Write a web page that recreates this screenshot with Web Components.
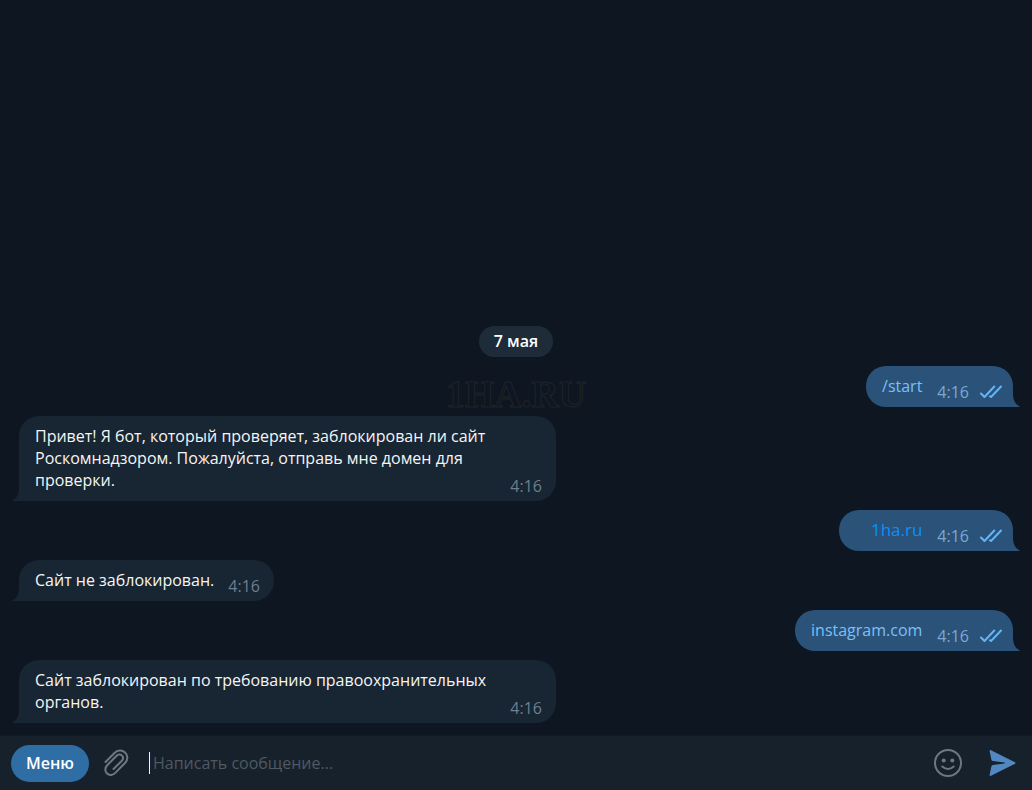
<!DOCTYPE html>
<html lang="ru">
<head>
<meta charset="utf-8">
<meta name="viewport" content="width=device-width, initial-scale=1">
<title>Чат с ботом</title>
<style>
html, body { margin: 0; height: 100%; }
body { background: #0e1621; font: 16px/22px "Open Sans", "Noto Sans", sans-serif; color: #f5f5f5; overflow: hidden; }
</style>
</head>
<body>
<chat-window>
  <chat-date>7 мая</chat-date>
  <chat-message out time="4:16"><a href="#start">/start</a></chat-message>
  <chat-message time="4:16">Привет! Я бот, который проверяет, заблокирован ли сайт Роскомнадзором. Пожалуйста, отправь мне домен для проверки.</chat-message>
  <chat-message out accent time="4:16"><a href="#1ha.ru">1ha.ru</a></chat-message>
  <chat-message time="4:16">Сайт не заблокирован.</chat-message>
  <chat-message out time="4:16"><a href="#instagram.com">instagram.com</a></chat-message>
  <chat-message time="4:16">Сайт заблокирован по требованию правоохранительных органов.</chat-message>
  <chat-composer slot="composer"></chat-composer>
  <chat-watermark slot="mark">1HA.RU</chat-watermark>
</chat-window>

<script>
class ShadowElement extends HTMLElement {
  constructor() {
    super();
    this.attachShadow({ mode: "open" }).innerHTML = this.constructor.markup;
  }
}

class ChatWindow extends ShadowElement {
  static markup = `
    <style>
      :host { display: flex; flex-direction: column; min-height: 100vh; position: relative; }
      main { flex: 1; display: flex; flex-direction: column; justify-content: flex-end; gap: 9px; padding: 12px 19px; }
    </style>
    <main><slot></slot></main>
    <slot name="mark"></slot>
    <slot name="composer"></slot>`;
}

class ChatDate extends ShadowElement {
  static markup = `
    <style>
      :host { display: block; align-self: center; padding: 4px 15px 5px; border-radius: 16px; background: #1e2c3a; color: #fff; font-weight: 600; }
    </style>
    <slot></slot>`;
}

class ChatMessage extends ShadowElement {
  static markup = `
    <style>
      :host { display: flow-root; position: relative; box-sizing: border-box; align-self: flex-start; width: fit-content; max-width: 537px; padding: 9px 14px 4px 16px; border-radius: 20px 20px 20px 0; background: #182533; }
      :host([out]) { align-self: flex-end; padding-right: 11px; border-radius: 20px 20px 0 20px; background: #2b5278; }
      :host([accent]) { padding-left: 32px; }
      ::slotted(a) { color: #79c0fa; text-decoration: none; }
      :host([accent]) ::slotted(a) { color: #0a90fb; font-size: 17px; }
      .meta { float: right; display: flex; align-items: center; gap: 11px; margin: 6px 0 0 14px; color: #6d7f8f; }
      :host([out]) .meta { margin-left: 15px; color: #7da8d3; }
      .ticks { display: none; }
      :host([out]) .ticks { display: block; }
      .tail { position: absolute; left: -7px; bottom: 0; fill: #182533; }
      :host([out]) .tail { left: auto; right: -7px; fill: #2b5278; transform: scaleX(-1); }
    </style>
    <slot></slot>
    <span class="meta"><time></time>
      <svg class="ticks" width="22" height="14" viewBox="0 0 22 14" fill="none" stroke="#62b5f7" stroke-width="2" stroke-linecap="round" stroke-linejoin="round"><path d="M1 8.5 4.5 12 14.3 1.5M10 11.3l1 .7L21 1.5"/></svg>
    </span>
    <svg class="tail" width="8" height="14" viewBox="0 0 8 14"><path d="M8 0H7C7 7 5 11 .5 13.2Q0 14 1 14H8Z"/></svg>`;
  connectedCallback() {
    this.shadowRoot.querySelector("time").textContent = this.getAttribute("time");
  }
}

class ChatWatermark extends ShadowElement {
  static markup = `
    <style>
      :host { position: absolute; left: 0; right: 0; bottom: 374px; text-align: center; font: bold 38px/44px "Liberation Serif", serif; color: #0e1621; -webkit-text-stroke: 1px #202326; pointer-events: none; }
    </style>
    <slot></slot>`;
}

class ChatComposer extends ShadowElement {
  static markup = `
    <style>
      :host { display: block; background: #17212b; }
      form { display: flex; align-items: center; padding: 9px 16px 8px 11px; border-top: 1px solid #111a24; margin: 0; }
      button { font: inherit; border: 0; padding: 0; background: none; color: #6c7883; }
      svg { display: block; }
      .menu { padding: 7px 15px 8px; border-radius: 19px; background: #2f6ea5; color: #fff; font-weight: 600; }
      .clip, .caret, input, .smile, .send { margin-bottom: 1px; }
      .clip { margin-left: 15px; margin-right: 20px; }
      .caret { width: 1px; height: 22px; background: #f5f5f5; }
      input { flex: 1; min-width: 0; height: 22px; font: inherit; color: #f5f5f5; background: none; border: 0; outline: 0; padding: 0 3px; }
      input::placeholder { color: #4e5964; opacity: 1; }
      .smile { margin-right: 26px; }
    </style>
    <form>
      <button class="menu" type="button">Меню</button>
      <button class="clip" type="button" aria-label="Прикрепить файл">
        <svg width="25" height="28" viewBox="0 0 25 28" fill="none" stroke="currentColor" stroke-width="2" stroke-linecap="round"><path d="M1.5 13 10.5 4C13.5 1 18 .8 21 3.4C24.3 6.4 24 10.8 21.2 13.8L11.6 23.6C9 26.3 5.3 26.7 3 24.5C.6 22.2.9 18.6 3.4 16L12.4 7C14.2 5.2 16.6 5.2 18 6.6C19.4 8 19.3 10.2 17.6 12L9.5 20"/></svg>
      </button>
      <span class="caret"></span>
      <input type="text" placeholder="Написать сообщение..." aria-label="Сообщение">
      <button class="smile" type="button" aria-label="Эмодзи">
        <svg width="30" height="30" viewBox="0 0 30 30" fill="none" stroke="currentColor" stroke-width="2"><circle cx="15" cy="15" r="13"/><g fill="currentColor" stroke="none"><circle cx="10.7" cy="12.5" r="2"/><circle cx="19.3" cy="12.5" r="2"/></g><path d="M9.3 18.5Q15 23.5 20.7 18.5" stroke-linecap="round"/></svg>
      </button>
      <button class="send" type="submit" aria-label="Отправить">
        <svg width="27" height="28" viewBox="0 0 27 28" fill="#5288c1"><path d="M.6 2.2Q.5.6 2 1.2L26 13.2Q27 14 26 14.8L2 26.8Q.5 27.4.6 25.8L2.5 17Q2.8 16.1 3.8 15.9L15.5 14.4Q16 14 15.5 13.6L3.8 12.1Q2.8 11.9 2.5 11Z"/></svg>
      </button>
    </form>`;
  connectedCallback() {
    this.shadowRoot.querySelector("form").addEventListener("submit", e => e.preventDefault());
  }
}

customElements.define("chat-window", ChatWindow);
customElements.define("chat-date", ChatDate);
customElements.define("chat-message", ChatMessage);
customElements.define("chat-watermark", ChatWatermark);
customElements.define("chat-composer", ChatComposer);
</script>
</body>
</html>
